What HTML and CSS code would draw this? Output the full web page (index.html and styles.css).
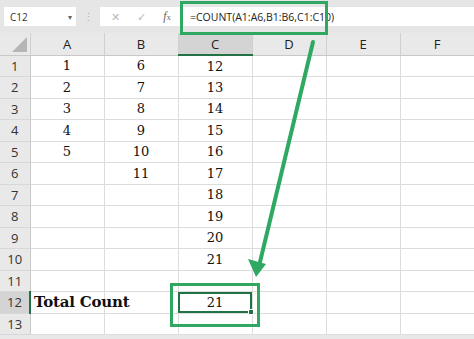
FILE: index.html
```html
<!DOCTYPE html>
<html lang="en">
<head>
  <meta charset="UTF-8">
  <title>COUNT example</title>
  <link rel="stylesheet" href="styles.css">
</head>
<body>
  <div class="app">
    <div class="formula-bar">
      <div class="name-box">
        <span>C12</span>
        <span class="caret">&#9662;</span>
      </div>
      <div class="grip">&#8942;</div>
      <div class="formula-area">
        <span class="fb-icon cancel">&#10005;</span>
        <span class="fb-icon enter">&#10003;</span>
        <span class="fb-icon fx"><i>f</i><small>x</small></span>
        <span class="formula-text">=COUNT(A1:A6,B1:B6,C1:C10)</span>
      </div>
    </div>

    <table class="sheet">
      <thead>
        <tr>
          <th class="corner"><span class="tri"></span></th>
          <th>A</th><th>B</th><th class="active-col">C</th><th>D</th><th>E</th><th>F</th>
        </tr>
      </thead>
      <tbody>
        <tr><th>1</th><td>1</td><td>6</td><td>12</td><td></td><td></td><td></td></tr>
        <tr><th>2</th><td>2</td><td>7</td><td>13</td><td></td><td></td><td></td></tr>
        <tr><th>3</th><td>3</td><td>8</td><td>14</td><td></td><td></td><td></td></tr>
        <tr><th>4</th><td>4</td><td>9</td><td>15</td><td></td><td></td><td></td></tr>
        <tr><th>5</th><td>5</td><td>10</td><td>16</td><td></td><td></td><td></td></tr>
        <tr><th>6</th><td></td><td>11</td><td>17</td><td></td><td></td><td></td></tr>
        <tr><th>7</th><td></td><td></td><td>18</td><td></td><td></td><td></td></tr>
        <tr><th>8</th><td></td><td></td><td>19</td><td></td><td></td><td></td></tr>
        <tr><th>9</th><td></td><td></td><td>20</td><td></td><td></td><td></td></tr>
        <tr><th>10</th><td></td><td></td><td>21</td><td></td><td></td><td></td></tr>
        <tr><th>11</th><td></td><td></td><td></td><td></td><td></td><td></td></tr>
        <tr><th class="active-row">12</th><td class="label">Total Count</td><td></td><td class="selected">21<span class="handle"></span></td><td></td><td></td><td></td></tr>
        <tr><th>13</th><td></td><td></td><td></td><td></td><td></td><td></td></tr>
      </tbody>
    </table>

    <!-- callout overlay: highlight boxes and arrow -->
    <svg class="callout" width="474" height="339" viewBox="0 0 474 339">
      <rect x="181.5" y="2.5" width="145" height="31" fill="none" stroke="#2fa862" stroke-width="3"/>
      <rect x="171.5" y="284.5" width="87" height="41" fill="none" stroke="#2fa862" stroke-width="3"/>
      <line x1="313" y1="42" x2="260" y2="262" stroke="#2fa862" stroke-width="4" stroke-linecap="round"/>
      <polygon points="248,259 266,264 256,277" fill="#2fa862"/>
    </svg>
  </div>
</body>
</html>
```

FILE: styles.css
```css
body {
  margin: 0;
  background: #ffffff;
  font-family: 'Open Sans', 'Noto Sans', sans-serif;
  color: #222;
}
.app {
  position: relative;
  width: 474px;
  height: 339px;
  overflow: hidden;
  background: #e8e8e8;
}
.formula-bar {
  display: flex;
  align-items: center;
  height: 33px;
  padding: 0 0 0 4px;
  background: #e6e6e6;
  box-sizing: border-box;
}
.name-box {
  display: flex;
  align-items: center;
  justify-content: space-between;
  width: 72px;
  height: 19px;
  padding: 0 4px 0 6px;
  box-sizing: border-box;
  background: #fff;
  font-size: 10px;
  color: #333;
}
.caret {
  font-size: 8px;
  color: #666;
}
.grip {
  width: 24px;
  text-align: center;
  font-size: 11px;
  color: #b0b0b0;
}
.formula-area {
  flex: 1;
  display: flex;
  align-items: center;
  height: 19px;
  background: #fff;
}
.fb-icon {
  width: 26px;
  text-align: center;
  color: #b8b8b8;
  font-size: 11px;
}
.cancel {
  margin-left: 2px;
}
.fx {
  color: #666;
  font-family: 'Liberation Serif', serif;
  font-size: 12px;
}
.fx small {
  font-size: 8px;
}
.formula-text {
  margin-left: 10px;
  font-size: 10.5px;
  color: #222;
}
.sheet {
  border-collapse: collapse;
  table-layout: fixed;
  width: 474px;
  background: #fff;
}
.sheet th,
.sheet td {
  height: 21.5px;
  padding: 0;
  box-sizing: border-box;
}
.sheet thead th {
  height: 22px;
  width: 74px;
  background: #e9e9e9;
  border-right: 1px solid #d0d0d0;
  border-bottom: 1px solid #c8c8c8;
  font-weight: normal;
  font-size: 13px;
  color: #222;
}
.sheet thead th.corner {
  width: 30px;
  position: relative;
}
.tri {
  position: absolute;
  right: 3px;
  bottom: 3px;
  width: 0;
  height: 0;
  border-left: 15px solid transparent;
  border-bottom: 15px solid #b5b5b5;
}
.sheet thead th.active-col {
  background: #d4d4d4;
  border-bottom: 2px solid #217346;
  color: #222;
}
.sheet tbody th {
  background: #e9e9e9;
  border-right: 1px solid #c8c8c8;
  border-bottom: 1px solid #d8d8d8;
  font-weight: normal;
  font-size: 13px;
  color: #333;
}
.sheet tbody th.active-row {
  background: #d4d4d4;
  border-right: 2px solid #217346;
}
.sheet td {
  border-right: 1px solid #dcdcdc;
  border-bottom: 1px solid #dcdcdc;
  text-align: center;
  font-family: 'DejaVu Serif', 'Liberation Serif', serif;
  font-size: 13px;
  color: #111;
  white-space: nowrap;
  overflow: visible;
}
.sheet td.label {
  text-align: left;
  padding-left: 3px;
  font-family: 'DejaVu Serif', serif;
  font-weight: bold;
  font-size: 15px;
  letter-spacing: -0.2px;
}
.sheet td.selected {
  position: relative;
  outline: 2px solid #217346;
  outline-offset: -2px;
}
.handle {
  position: absolute;
  right: -2px;
  bottom: -2px;
  width: 4px;
  height: 4px;
  background: #217346;
  border: 1px solid #fff;
}
.callout {
  position: absolute;
  left: 0;
  top: 0;
  pointer-events: none;
}
```
